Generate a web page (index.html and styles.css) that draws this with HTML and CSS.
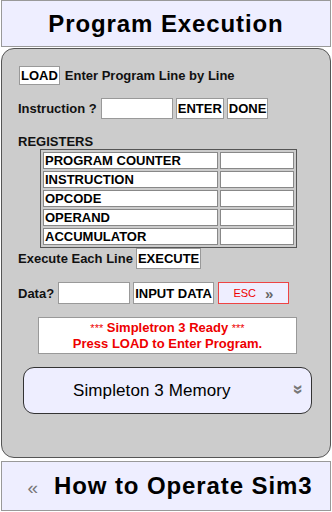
FILE: index.html
```html
<!DOCTYPE html>
<html lang="en">
<head>
  <meta charset="UTF-8">
  <title>Simpletron 3 - Program Execution</title>
  <link rel="stylesheet" href="styles.css">
</head>
<body>
  <div class="page">
    <div class="bar top-bar">Program Execution</div>

    <div class="panel">
      <div class="row load-row">
        <span class="btn">LOAD</span>
        <span class="label">Enter Program Line by Line</span>
      </div>
      <div class="row instr-row">
        <span class="label">Instruction ?</span>
        <span class="field instr-field"></span>
        <span class="btn">ENTER</span>
        <span class="btn">DONE</span>
      </div>
      <div class="label reg-title">REGISTERS</div>
      <table class="registers">
        <tr><td class="reg-name">PROGRAM COUNTER</td><td class="reg-val"></td></tr>
        <tr><td class="reg-name">INSTRUCTION</td><td class="reg-val"></td></tr>
        <tr><td class="reg-name">OPCODE</td><td class="reg-val"></td></tr>
        <tr><td class="reg-name">OPERAND</td><td class="reg-val"></td></tr>
        <tr><td class="reg-name">ACCUMULATOR</td><td class="reg-val"></td></tr>
      </table>
      <div class="row exec-row">
        <span class="label">Execute Each Line</span>
        <span class="btn">EXECUTE</span>
      </div>
      <div class="row data-row">
        <span class="label">Data?</span>
        <span class="field data-field"></span>
        <span class="btn">INPUT DATA</span>
        <span class="btn esc">ESC <span class="esc-arrow">&raquo;</span></span>
      </div>
      <div class="message">
        <div><span class="stars">***</span> Simpletron 3 Ready <span class="stars">***</span></div>
        <div>Press LOAD to Enter Program.</div>
      </div>
      <div class="memory">
        <span class="memory-text">Simpleton 3 Memory</span>
        <span class="memory-arrow">&raquo;</span>
      </div>
    </div>

    <div class="bar bottom-bar"><span class="back">&laquo;</span> How to Operate Sim3</div>
  </div>
</body>
</html>
```

FILE: styles.css
```css
body {
  margin: 0;
  background: white;
  font-family: 'Liberation Sans', Arial, sans-serif;
  color: black;
}
.page {
  width: 330px;
  margin-left: 1px;
}
.bar {
  background: #eeeeff;
  border: 1px solid #999;
  font-weight: bold;
  font-size: 24px;
  letter-spacing: 0.9px;
  display: flex;
  align-items: center;
  justify-content: center;
  box-sizing: border-box;
}
.top-bar {
  height: 47px;
}
.bottom-bar {
  height: 50px;
  margin-top: 3px;
  padding-left: 8px;
}
.back {
  color: #777;
  font-size: 19px;
  font-weight: normal;
  margin-right: 18px;
  margin-top: 4px;
  letter-spacing: -2px;
}
.panel {
  background: #cccccc;
  border: 1px solid #555;
  border-radius: 13px;
  height: 410px;
  box-sizing: border-box;
  padding: 17px 0 0 16px;
  margin-top: 1px;
}
.row {
  display: flex;
  align-items: center;
  gap: 3px;
}
.label {
  font-size: 13px;
  font-weight: bold;
  color: #111;
}
.btn {
  background: white;
  border: 1px solid #999;
  font-size: 13px;
  font-weight: bold;
  height: 19px;
  box-sizing: border-box;
  padding: 0 1px;
  display: flex;
  align-items: center;
}
.load-row {
  margin-left: 1px;
}
.load-row .btn {
  margin-right: 2px;
}
.instr-row {
  margin-top: 13px;
}
.instr-row .btn {
  height: 21px;
}
.field {
  background: white;
  border: 1px solid #999;
  height: 21px;
  box-sizing: border-box;
}
.instr-field {
  width: 72px;
  margin-left: 1px;
}
.reg-title {
  margin-top: 15px;
}
.registers {
  margin: 0 0 0 22px;
  width: 257px;
  border: 1px solid #555;
  border-spacing: 2px;
  font-size: 13px;
  font-weight: bold;
  background: #cccccc;
}
.registers td {
  background: white;
  border: 1px solid #888;
  height: 15px;
  padding: 0 1px;
}
.reg-val {
  width: 70px;
}
.exec-row {
  margin-top: 0;
}
.exec-row .btn {
  height: 21px;
}
.data-row {
  margin-top: 13px;
}
.data-field {
  width: 72px;
  height: 22px;
  margin-left: 1px;
}
.data-row .btn {
  height: 22px;
}
.btn.esc {
  background: #eeeeff;
  border: 1px solid #e44;
  color: #e00;
  font-weight: normal;
  font-size: 11px;
  width: 71px;
  justify-content: center;
  margin-left: 1px;
}
.esc-arrow {
  color: #666;
  font-weight: bold;
  font-size: 15px;
  margin-left: 9px;
}
.message {
  margin: 13px 0 0 20px;
  width: 259px;
  height: 37px;
  box-sizing: border-box;
  background: white;
  border: 1px solid #999;
  color: #ee0000;
  font-size: 13px;
  font-weight: bold;
  text-align: center;
  line-height: 15px;
  padding-top: 2px;
}
.stars {
  font-weight: normal;
  font-size: 11px;
}
.memory {
  margin: 13px 0 0 5px;
  width: 289px;
  height: 47px;
  box-sizing: border-box;
  background: #eeeeff;
  border: 1px solid #333;
  border-radius: 11px;
  font-size: 17px;
  letter-spacing: 0.1px;
  display: flex;
  align-items: center;
  padding: 0 8px 0 49px;
}
.memory-text {
  flex: 1;
}
.memory-arrow {
  color: #777;
  font-weight: bold;
  font-size: 18px;
  transform: rotate(90deg);
  margin-top: -2px;
}
```
